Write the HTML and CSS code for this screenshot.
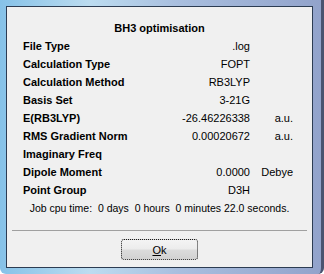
FILE: index.html
```html
<!DOCTYPE html>
<html lang="en">
<head>
    <meta charset="UTF-8">
    <meta name="viewport" content="width=device-width, initial-scale=1.0">
    <title>BH3 optimisation</title>
    <link rel="stylesheet" href="styles.css">
</head>
<body>
    <div class="window">
        <div class="dialog">
            <h1 class="title">BH3 optimisation</h1>
            <div class="rows">
                <span class="label">File Type</span><span class="value">.log</span><span class="unit"></span>
                <span class="label">Calculation Type</span><span class="value">FOPT</span><span class="unit"></span>
                <span class="label">Calculation Method</span><span class="value">RB3LYP</span><span class="unit"></span>
                <span class="label">Basis Set</span><span class="value">3-21G</span><span class="unit"></span>
                <span class="label">E(RB3LYP)</span><span class="value">-26.46226338</span><span class="unit">a.u.</span>
                <span class="label">RMS Gradient Norm</span><span class="value">0.00020672</span><span class="unit">a.u.</span>
                <span class="label">Imaginary Freq</span><span class="value"></span><span class="unit"></span>
                <span class="label">Dipole Moment</span><span class="value">0.0000</span><span class="unit">Debye</span>
                <span class="label">Point Group</span><span class="value">D3H</span><span class="unit"></span>
            </div>
            <p class="cpu">Job cpu time:&nbsp; 0 days&nbsp; 0 hours&nbsp; 0 minutes 22.0 seconds.</p>
            <hr class="separator">
            <div class="actions">
                <button class="ok"><u>O</u>k</button>
            </div>
        </div>
    </div>
</body>
</html>
```

FILE: styles.css
```css
body {
    margin: 0;
    font-family: "Liberation Sans", Arial, sans-serif;
    font-size: 11px;
    color: #000000;
}
.window {
    width: 324px;
    height: 274px;
    box-sizing: border-box;
    padding: 6px 8px 6px 6px;
    background: linear-gradient(to right, #86c2e8, #bcdcf0 28%, #a9bfdf 55%, #92a3cb 100%);
    border-right: 3px solid #4a5470;
    border-radius: 0 0 6px 6px;
}
.dialog {
    height: 262px;
    box-sizing: border-box;
    border: 1px solid #2c3c52;
    background-color: #f0f0f0;
    padding-top: 12px;
}
.title {
    margin: 0;
    font-size: 11px;
    line-height: 18px;
    font-weight: bold;
    text-align: center;
}
.rows {
    display: grid;
    grid-template-columns: 1fr 103px 43px;
    grid-auto-rows: 18px;
    align-items: center;
    padding: 0 19px 0 16px;
}
.label {
    font-weight: bold;
}
.value,
.unit {
    text-align: right;
}
.cpu {
    margin: 0;
    font-size: 10.5px;
    line-height: 18px;
    text-align: center;
}
.separator {
    margin: 13px 5px 0;
    border: none;
    border-top: 1px solid #a0a0a0;
    height: 0;
}
.actions {
    display: flex;
    justify-content: center;
    margin-top: 8px;
}
.ok {
    width: 77px;
    height: 21px;
    padding: 0;
    font-family: "Liberation Sans", Arial, sans-serif;
    font-size: 11px;
    color: #000000;
    border: 1px dotted #1a1a1a;
    border-radius: 3px;
    background: linear-gradient(to bottom, #f4f4f4, #ececec 48%, #dcdcdc 52%, #d2d2d2);
}
```
